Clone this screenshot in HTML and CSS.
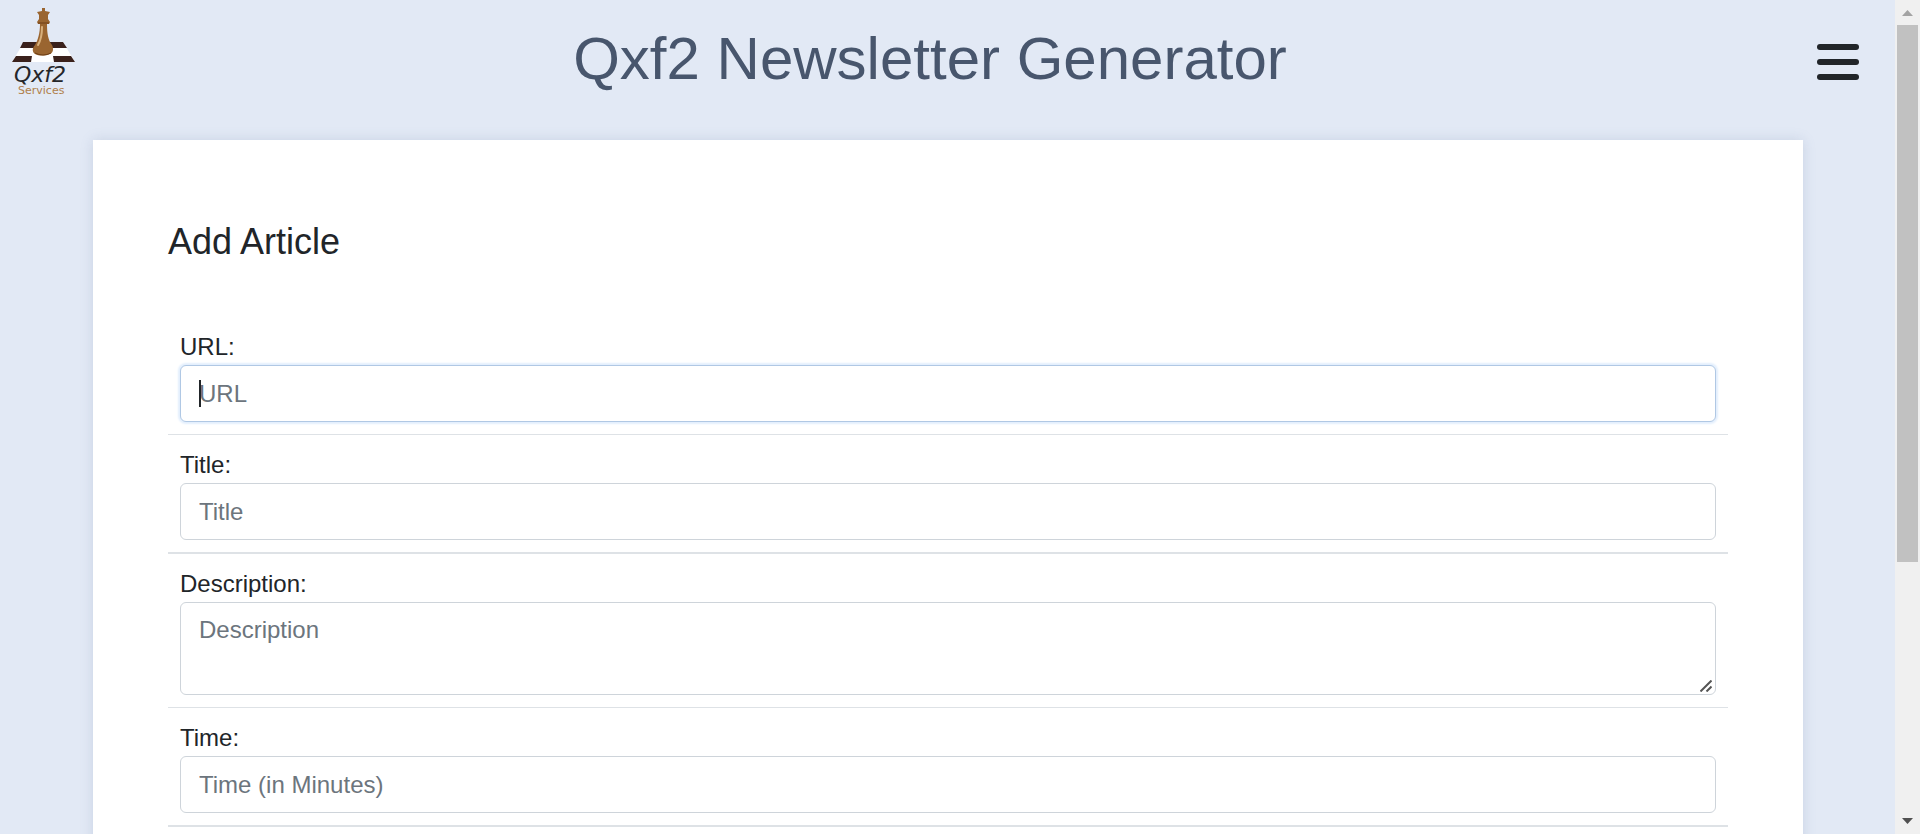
FILE: index.html
```html
<!DOCTYPE html>
<html lang="en">
<head>
<meta charset="utf-8">
<title>Qxf2 Newsletter Generator</title>
<link rel="stylesheet" href="styles.css">
</head>
<body>
<div class="viewport">
  <div class="page">
    <header class="topbar">
      <a class="logo" href="#" aria-label="Qxf2 Services">
        <svg viewBox="0 0 90 110" width="90" height="110">
          <path fill="#fff" d="M24 42H63L75 62H12Z"/>
          <path fill="#3a211c" d="M23 42H38L35 48H20ZM49 42H63L67 48H52ZM16 56H32L31 62H12ZM53 56H71L75 62H54Z"/>
          <path fill="#9a6530" d="M42 8H45V11L50 12 48 15 48 19 50 22 49 24H47C47 33 48 40 52 45 54 49 53 53 50 54 45 56 39 56 35 54 32 52 32 48 35 45 38 40 40 33 40 24H38L37 22 39 19 39 15 37 12 42 11Z"/>
          <path fill="none" stroke="#d8b07c" stroke-width="2" stroke-linecap="round" d="M42 27C42 35 41 40 38 45"/>
          <path fill="none" stroke="#6e3f16" stroke-width="1" d="M38 23H49M35 53Q43 57 51 53"/>
          <text class="logo-name" x="14" y="82">Qxf2</text>
          <text class="logo-sub" x="18" y="94">Services</text>
        </svg>
      </a>
      <h1 class="site-title">Qxf2 Newsletter Generator</h1>
      <button class="menu" type="button" aria-label="Menu"><span class="bar"></span><span class="bar"></span><span class="bar"></span></button>
    </header>
    <main class="card">
      <h2 class="heading">Add Article</h2>
      <form class="form">
        <div class="row">
          <label for="url">URL:</label>
          <div class="field">
            <input class="control active" id="url" type="text" placeholder="URL">
            <span class="caret"></span>
          </div>
        </div>
        <div class="row strong">
          <label for="title">Title:</label>
          <div class="field"><input class="control" id="title" type="text" placeholder="Title"></div>
        </div>
        <div class="row">
          <label for="description">Description:</label>
          <div class="field">
            <textarea class="control area" id="description" placeholder="Description"></textarea>
            <svg class="grip" viewBox="0 0 12 12" width="12" height="12"><path d="M.5 11.500 11.500 .5M6.500 11.500 11.500 6.500"/></svg>
          </div>
        </div>
        <div class="row strong">
          <label for="time">Time:</label>
          <div class="field"><input class="control" id="time" type="text" placeholder="Time (in Minutes)"></div>
        </div>
      </form>
    </main>
  </div>
  <div class="scrollbar" aria-hidden="true">
    <svg class="arrow" viewBox="0 0 25 25"><path fill="#a3a3a3" d="M7 16 12.500 10 18 16Z"/></svg>
    <div class="track"><div class="thumb"></div></div>
    <svg class="arrow" viewBox="0 0 25 25"><path fill="#505050" d="M7 9 12.500 15 18 9Z"/></svg>
  </div>
</div>
</body>
</html>
```
FILE: styles.css
```css
* { box-sizing: border-box; }

body {
  margin: 0;
  font-family: "Liberation Sans", Arial, sans-serif;
  font-size: 24px;
  line-height: 36px;
  color: #212529;
  background: #e2e9f5;
}

.viewport {
  display: flex;
  height: 100vh;
  overflow: hidden;
}

.page {
  flex: 1;
  min-width: 0;
  overflow: hidden;
}

.topbar {
  display: grid;
  grid-template-columns: 90px 1fr 125px;
  align-items: start;
  height: 140px;
}

.logo svg { display: block; }

.logo-name {
  font-family: "DejaVu Sans", sans-serif;
  font-size: 22px;
  font-style: italic;
  font-weight: 200;
  line-height: 1;
  fill: #25262a;
}

.logo-sub {
  font-family: "DejaVu Sans", sans-serif;
  font-size: 11px;
  line-height: 1;
  fill: #b07f4a;
}

.site-title {
  margin: 0;
  padding-top: 23px;
  font-size: 60px;
  font-weight: 400;
  line-height: 72px;
  text-align: center;
  color: #48566d;
}

.menu {
  display: grid;
  gap: 9px;
  width: 42px;
  margin: 44px 0 0 47px;
  padding: 0;
  border: 0;
  background: none;
}

.bar {
  height: 6px;
  border-radius: 3px;
  background: #212529;
}

.card {
  min-height: 100vh;
  margin: 0 92px 0 93px;
  padding: 80px 75px;
  background: #fff;
  box-shadow: 0 0 12px rgba(100, 120, 160, 0.2);
}

.heading {
  margin: 0 0 54px;
  font-size: 36px;
  font-weight: 400;
  line-height: 43px;
}

.row {
  padding: 12px;
  border-bottom: 1px solid #dee2e6;
}

.row.strong { border-bottom-width: 2px; }

.row label { display: block; }

.field { position: relative; }

.control {
  display: block;
  width: 100%;
  height: 57px;
  padding: 9px 18px;
  border: 1px solid #ced4da;
  border-radius: 6px;
  outline: 0;
  background: #fff;
  font: inherit;
  color: #495057;
}

.control::placeholder {
  color: #6c757d;
  opacity: 1;
}

.control.active {
  border-color: #b0c8e4;
  box-shadow: 0 0 2px 2px #e3effd;
}

.control.area {
  height: 93px;
  resize: none;
}

.caret {
  position: absolute;
  top: 15px;
  left: 19px;
  width: 2px;
  height: 27px;
  background: #212529;
}

.grip {
  position: absolute;
  right: 4px;
  bottom: 3px;
  fill: none;
  stroke: #555;
  stroke-width: 2;
}

.scrollbar {
  display: flex;
  flex-direction: column;
  width: 25px;
  background: #f0f0f0;
}

.arrow {
  display: block;
  width: 25px;
  height: 25px;
}

.track { flex: 1; }

.thumb {
  height: 68.500%;
  margin: 0 2px;
  background: #c1c1c1;
}
```
